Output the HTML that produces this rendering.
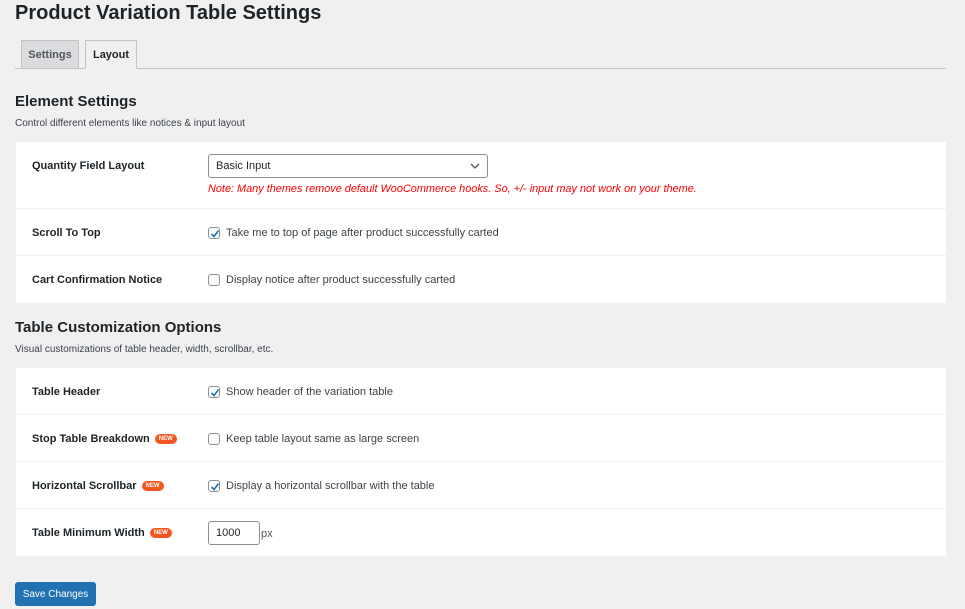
<!DOCTYPE html>
<html><head><style>
*{margin:0;padding:0;box-sizing:border-box}
body{width:965px;height:609px;background:#f0f0f1;font-family:"Liberation Sans",sans-serif;color:#1d2327;position:relative;overflow:hidden}
.a{position:absolute;white-space:nowrap}
.panel{position:absolute;left:16px;width:930px;background:#fff}
.div{position:absolute;left:0;width:930px;height:1px;background:#f0f0f1}
.lbl{position:absolute;left:16px;font-size:11px;font-weight:bold;color:#1d2327}
.txt{position:absolute;left:210px;font-size:11px;color:#3c434a}
.cb{position:absolute;left:192px;width:12px;height:12px;border:1px solid #8c8f94;border-radius:3px;background:#fff}
.cb svg{position:absolute;left:0;top:0}
.new{display:inline-block;background:#f3561f;color:#fff;font-size:6px;font-weight:bold;border-radius:8px;padding:2px 4px;vertical-align:2px;margin-left:5px}
</style></head><body>
<div class="a" style="left:15px;top:2px;font-size:20px;font-weight:bold;color:#1d2327">Product Variation Table Settings</div>
<div class="a" style="left:15px;top:68px;width:931px;height:1px;background:#c3c4c7"></div>
<div class="a" style="left:21px;top:40px;width:58px;height:29px;background:#dcdcde;border:1px solid #c3c4c7;font-size:11px;font-weight:bold;color:#50575e;text-align:center;line-height:28px">Settings</div>
<div class="a" style="left:85px;top:40px;width:52px;height:29px;background:#f0f0f1;border:1px solid #c3c4c7;border-bottom:1px solid #f0f0f1;font-size:11px;font-weight:bold;color:#1d2327;text-align:center;line-height:28px">Layout</div>
<div class="a" style="left:15px;top:93px;font-size:15px;font-weight:bold">Element Settings</div>
<div class="a" style="left:15px;top:118px;font-size:10px;color:#3c434a">Control different elements like notices &amp; input layout</div>
<div class="panel" style="top:142px;height:161px">
 <div class="lbl" style="top:18px">Quantity Field Layout</div>
 <div class="a" style="left:192px;top:12px;width:280px;height:24px;border:1px solid #8c8f94;border-radius:3px;font-size:11px;line-height:23px;padding-left:7px">Basic Input
  <svg style="position:absolute;right:7px;top:7px" width="10" height="8"><path d="M1 2l4 4 4-4" stroke="#50575e" stroke-width="1.3" fill="none"/></svg></div>
 <div class="a" style="left:192px;top:41px;font-size:10.9px;font-style:italic;color:#f00">Note: Many themes remove default WooCommerce hooks. So, +/- input may not work on your theme.</div>
 <div class="div" style="top:66px"></div>
 <div class="lbl" style="top:85px">Scroll To Top</div>
 <div class="cb" style="top:85px"><svg width="12" height="12"><path d="M2.5 6l2.5 2.5 4.5-6" stroke="#2271b1" stroke-width="1.6" fill="none"/></svg></div>
 <div class="txt" style="top:85px">Take me to top of page after product successfully carted</div>
 <div class="div" style="top:113px"></div>
 <div class="lbl" style="top:132px">Cart Confirmation Notice</div>
 <div class="cb" style="top:132px"></div>
 <div class="txt" style="top:132px">Display notice after product successfully carted</div>
</div>
<div class="a" style="left:15px;top:319px;font-size:15px;font-weight:bold">Table Customization Options</div>
<div class="a" style="left:15px;top:344px;font-size:10px;color:#3c434a">Visual customizations of table header, width, scrollbar, etc.</div>
<div class="panel" style="top:368px;height:188px">
 <div class="lbl" style="top:18px">Table Header</div>
 <div class="cb" style="top:18px"><svg width="12" height="12"><path d="M2.5 6l2.5 2.5 4.5-6" stroke="#2271b1" stroke-width="1.6" fill="none"/></svg></div>
 <div class="txt" style="top:18px">Show header of the variation table</div>
 <div class="div" style="top:46px"></div>
 <div class="lbl" style="top:65px">Stop Table Breakdown<span class="new">NEW</span></div>
 <div class="cb" style="top:65px"></div>
 <div class="txt" style="top:65px">Keep table layout same as large screen</div>
 <div class="div" style="top:93px"></div>
 <div class="lbl" style="top:112px">Horizontal Scrollbar<span class="new">NEW</span></div>
 <div class="cb" style="top:112px"><svg width="12" height="12"><path d="M2.5 6l2.5 2.5 4.5-6" stroke="#2271b1" stroke-width="1.6" fill="none"/></svg></div>
 <div class="txt" style="top:112px">Display a horizontal scrollbar with the table</div>
 <div class="div" style="top:140px"></div>
 <div class="lbl" style="top:159px">Table Minimum Width<span class="new">NEW</span></div>
 <div class="a" style="left:192px;top:153px;width:52px;height:24px;border:1px solid #8c8f94;border-radius:3px;font-size:11px;line-height:23px;padding-left:7px">1000</div>
 <div class="a" style="left:245px;top:160px;font-size:11px;color:#50575e">px</div>
</div>
<div class="a" style="left:15px;top:582px;width:81px;height:24px;background:#2271b1;border-radius:3px;color:#fff;font-size:10px;text-align:center;line-height:25px">Save Changes</div>
</body></html>
